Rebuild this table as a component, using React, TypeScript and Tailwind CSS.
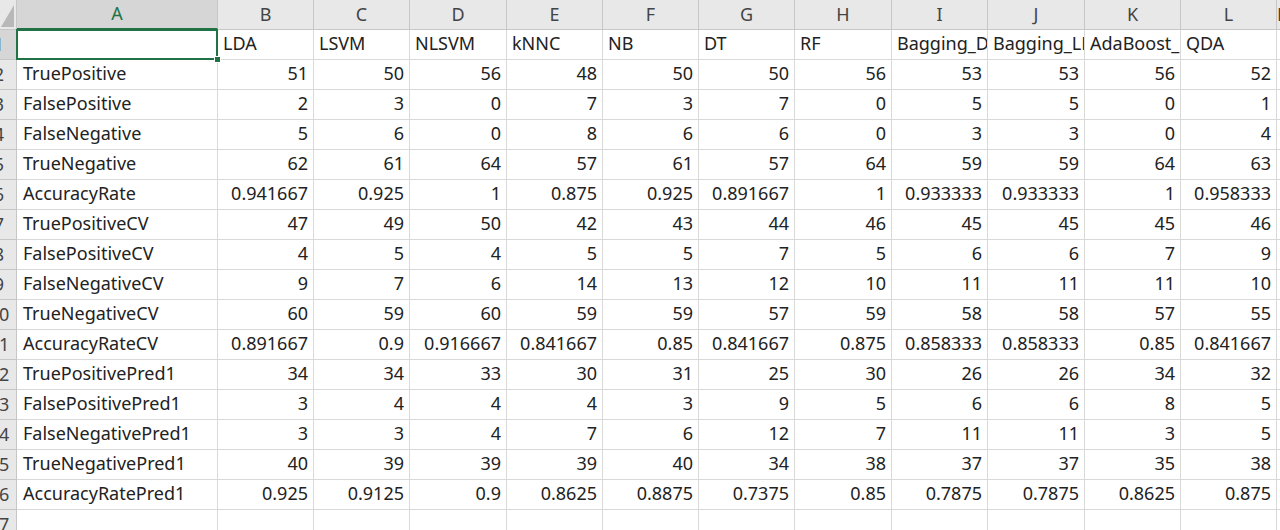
const cols = ['A', 'B', 'C', 'D', 'E', 'F', 'G', 'H', 'I', 'J', 'K', 'L', 'M'];
const models = ['LDA', 'LSVM', 'NLSVM', 'kNNC', 'NB', 'DT', 'RF', 'Bagging_DT', 'Bagging_LDA', 'AdaBoost_DT', 'QDA'];

const rows: [string, string[]][] = [
  ['TruePositive', ['51', '50', '56', '48', '50', '50', '56', '53', '53', '56', '52']],
  ['FalsePositive', ['2', '3', '0', '7', '3', '7', '0', '5', '5', '0', '1']],
  ['FalseNegative', ['5', '6', '0', '8', '6', '6', '0', '3', '3', '0', '4']],
  ['TrueNegative', ['62', '61', '64', '57', '61', '57', '64', '59', '59', '64', '63']],
  ['AccuracyRate', ['0.941667', '0.925', '1', '0.875', '0.925', '0.891667', '1', '0.933333', '0.933333', '1', '0.958333']],
  ['TruePositiveCV', ['47', '49', '50', '42', '43', '44', '46', '45', '45', '45', '46']],
  ['FalsePositiveCV', ['4', '5', '4', '5', '5', '7', '5', '6', '6', '7', '9']],
  ['FalseNegativeCV', ['9', '7', '6', '14', '13', '12', '10', '11', '11', '11', '10']],
  ['TrueNegativeCV', ['60', '59', '60', '59', '59', '57', '59', '58', '58', '57', '55']],
  ['AccuracyRateCV', ['0.891667', '0.9', '0.916667', '0.841667', '0.85', '0.841667', '0.875', '0.858333', '0.858333', '0.85', '0.841667']],
  ['TruePositivePred1', ['34', '34', '33', '30', '31', '25', '30', '26', '26', '34', '32']],
  ['FalsePositivePred1', ['3', '4', '4', '4', '3', '9', '5', '6', '6', '8', '5']],
  ['FalseNegativePred1', ['3', '3', '4', '7', '6', '12', '7', '11', '11', '3', '5']],
  ['TrueNegativePred1', ['40', '39', '39', '39', '40', '34', '38', '37', '37', '35', '38']],
  ['AccuracyRatePred1', ['0.925', '0.9125', '0.9', '0.8625', '0.8875', '0.7375', '0.85', '0.7875', '0.7875', '0.8625', '0.875']],
];

const grid =
  'grid grid-cols-[17px_201px_96px_96px_97px_96px_96px_96px_97px_96px_97px_96px_96px_1fr]';

// row number header, clipped on the left like the screenshot
function RowHead({ n, active }: { n: number; active?: boolean }) {
  return (
    <div
      className={
        'h-full overflow-hidden border-b border-r text-[18px] text-[#444] ' +
        (active ? 'bg-[#d6d6d6] border-r-[#217346] border-b-[#c6c6c6]' : 'bg-[#e8e8e8] border-[#c6c6c6]')
      }
    >
      <div className="ml-[-16px] flex h-full w-[30px] items-center justify-center">{n}</div>
    </div>
  );
}

function Cell({ text, right }: { text?: string; right?: boolean }) {
  return (
    <div
      className={
        'flex h-full items-center overflow-hidden whitespace-nowrap border-b border-r border-[#d9d9d9] pb-[2px] text-[#222] ' +
        (right ? 'justify-end pr-[5px]' : 'pl-[5px]')
      }
    >
      {text}
    </div>
  );
}

export default function App() {
  return (
    <div
      className="h-[530px] w-[1280px] overflow-hidden bg-white text-[18px]"
      style={{ fontFamily: '"Noto Sans", "Noto Sans CJK JP", sans-serif' }}
    >
      {/* Column headers */}
      <div className={grid + ' h-[30px]'}>
        <div className="flex h-full items-end justify-end border-b border-r border-[#c6c6c6] bg-[#e8e8e8] pb-[2px] pr-[2px]">
          <svg width="13" height="22" viewBox="0 0 13 22">
            <polygon points="13,0 13,22 0,22" fill="#b8b8b8" />
          </svg>
        </div>
        {cols.map((c, i) => (
          <div
            key={c}
            className={
              'flex h-full items-center justify-center border-r border-[#c6c6c6] pb-[1px] ' +
              (i === 0
                ? 'border-b-2 border-b-[#217346] bg-[#d6d6d6] text-[#217346]'
                : 'border-b border-b-[#c6c6c6] bg-[#e8e8e8] text-[#444]')
            }
          >
            {c}
          </div>
        ))}
      </div>

      {/* Row 1: model names */}
      <div className={grid + ' h-[30px]'}>
        <RowHead n={1} active />
        <div className="relative h-full border-b border-r border-[#d9d9d9]">
          <div className="absolute inset-[-1px] border-2 border-[#217346]" />
          <div className="absolute bottom-[-4px] right-[-4px] h-[7px] w-[7px] border border-white bg-[#217346]" />
        </div>
        {models.map((m) => (
          <Cell key={m} text={m} />
        ))}
        <Cell />
      </div>

      {rows.map(([label, vals], r) => (
        <div key={label} className={grid + ' h-[30px]'}>
          <RowHead n={r + 2} />
          <div className="flex h-full items-center overflow-hidden whitespace-nowrap border-b border-r border-[#d9d9d9] pb-[2px] pl-[6px] text-[#222]">
            {label}
          </div>
          {vals.map((v, i) => (
            <Cell key={i} text={v} right />
          ))}
          <Cell />
        </div>
      ))}

      {/* Row 17, partly visible */}
      <div className={grid + ' h-[30px]'}>
        <RowHead n={17} />
        {cols.map((c) => (
          <Cell key={c} />
        ))}
      </div>
    </div>
  );
}
